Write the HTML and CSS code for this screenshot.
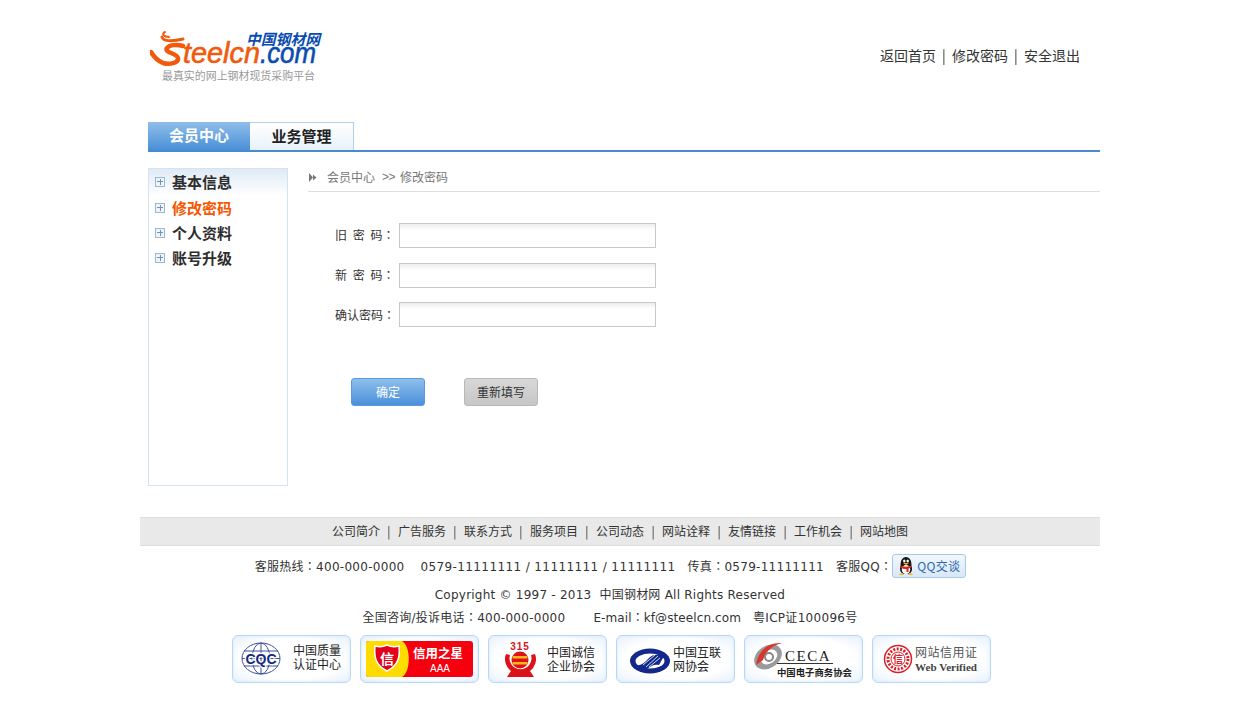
FILE: index.html
```html
<!DOCTYPE html>
<html lang="zh-CN">
<head>
<meta charset="utf-8">
<title>修改密码</title>
<link rel="stylesheet" href="styles.css">
</head>
<body>
<div class="page">
  <header class="top">
    <svg class="logo" width="174" height="54" viewBox="0 0 174 54">
      <g class="logo-s">
        <path class="s3" d="M12 7C13 11 21 12 33 9"/>
        <path class="s2" d="M15 2C11 4 14 7 19 7"/>
        <path class="s5" d="M33 16C26 14 19 15 17 18C14 23 27 23 28 28C29 33 19 35 13 33C8 31 4 27 1 22"/>
      </g>
      <text class="logo-en logo-orange" x="33" y="33" textLength="77" lengthAdjust="spacingAndGlyphs">teelcn</text>
      <text class="logo-en logo-blue" x="110" y="33" textLength="56" lengthAdjust="spacingAndGlyphs">.com</text>
      <text class="logo-cn" x="96" y="15" textLength="74" lengthAdjust="spacingAndGlyphs">中国钢材网</text>
      <text class="logo-sub" x="12" y="50" textLength="153" lengthAdjust="spacingAndGlyphs">最真实的网上钢材现货采购平台</text>
    </svg>
    <nav class="toplinks"><a>返回首页</a><i>|</i><a>修改密码</a><i>|</i><a>安全退出</a></nav>
  </header>

  <div class="tabs">
    <a class="tab tab-on">会员中心</a>
    <a class="tab">业务管理</a>
  </div>

  <main class="main">
    <aside class="side">
      <div class="side-item"><span class="plus"></span>基本信息</div>
      <div class="side-item side-cur"><span class="plus"></span>修改密码</div>
      <div class="side-item"><span class="plus"></span>个人资料</div>
      <div class="side-item"><span class="plus"></span>账号升级</div>
    </aside>
    <section class="content">
      <div class="crumb">
        <svg class="crumb-icon" width="8" height="9" viewBox="0 0 8 9"><path d="M0 0l4 4.500-4 4.500zM4 1.500l3.500 3-3.500 3z"/></svg>
        <span>会员中心</span><span class="crumb-sep">&gt;&gt;</span><span>修改密码</span>
      </div>
      <form class="form">
        <div class="row"><label>旧 密 码：</label><input class="field" type="password"></div>
        <div class="row"><label>新 密 码：</label><input class="field" type="password"></div>
        <div class="row row-last"><label>确认密码：</label><input class="field" type="password"></div>
        <div class="btns">
          <button class="btn btn-blue" type="button">确定</button>
          <button class="btn btn-gray" type="button">重新填写</button>
        </div>
      </form>
    </section>
  </main>

  <footer class="foot">
    <nav class="foot-nav"><a>公司简介</a><i>|</i><a>广告服务</a><i>|</i><a>联系方式</a><i>|</i><a>服务项目</a><i>|</i><a>公司动态</a><i>|</i><a>网站诠释</a><i>|</i><a>友情链接</a><i>|</i><a>工作机会</a><i>|</i><a>网站地图</a></nav>
    <div class="foot-body">
      <div class="hotline">
        <span>客服热线：400-000-0000</span><span class="hot-phones">0579-11111111 / 11111111 / 11111111</span><span>传真：0579-11111111</span><span class="hot-qq">客服QQ：</span>
        <span class="qq">
          <svg width="18" height="20" viewBox="0 0 18 20">
            <ellipse cx="9" cy="8" rx="5.500" ry="7" fill="#161616"/>
            <path d="M3 13c0-3 1-4 2-5h8c1 1 2 2 2 5 0 3-2 5-6 5s-6-2-6-5z" fill="#161616"/>
            <ellipse cx="9" cy="13.500" rx="4.200" ry="4.500" fill="#fff"/>
            <ellipse cx="7.300" cy="5" rx="1.200" ry="1.600" fill="#fff"/><ellipse cx="10.700" cy="5" rx="1.200" ry="1.600" fill="#fff"/>
            <path d="M6 7h6l-3 2z" fill="#f5b21a"/>
            <path d="M3.500 9.500c3 1.500 8 1.500 11 0v2l-3 1v3.500H9.500v-3c-2 0-5-.5-6-1.500z" fill="#d8261c"/>
            <path d="M2 19c1-2 4-2 5 0zM11 19c1-2 4-2 5 0z" fill="#f5b21a"/>
          </svg>
          QQ交谈
        </span>
      </div>
      <p class="copy">Copyright © 1997 - 2013&nbsp; 中国钢材网 All Rights Reserved</p>
      <p class="contact"><span>全国咨询/投诉电话：400-000-0000</span><span>E-mail：kf@steelcn.com</span><span>粤ICP证100096号</span></p>
      <div class="badges">
        <div class="badge">
          <svg width="117" height="46" viewBox="1 1 117 46">
            <g class="globe"><ellipse cx="29" cy="23.500" rx="19" ry="15.500"/><ellipse cx="29" cy="23.500" rx="9" ry="15.500"/><path d="M29 8v31M12 16h34M12 31h34M10 23.500h38"/></g>
            <text class="cqc" x="29" y="29" text-anchor="middle">CQC</text>
            <text class="bt" x="61" y="20">中国质量</text>
            <text class="bt" x="61" y="34">认证中心</text>
          </svg>
        </div>
        <div class="badge">
          <svg width="117" height="46" viewBox="1 1 117 46">
            <rect x="6" y="6" width="107" height="36" rx="3" fill="#f5000f"/>
            <path d="M9 6h33c9 5 9 31 0 36H9a3 3 0 0 1-3-3V9a3 3 0 0 1 3-3z" fill="#ffdc00"/>
            <path d="M15 11c4 1 8 1 12-1 4 2 8 2 12 1 1 10 0 19-12 25-12-6-13-15-12-25z" fill="#e2001a" stroke="#fff" stroke-width="1.500"/>
            <text class="xin" x="27" y="29" text-anchor="middle">信</text>
            <text class="star" x="53" y="23">信用之星</text>
            <text class="aaa" x="70" y="37">AAA</text>
          </svg>
        </div>
        <div class="badge">
          <svg width="117" height="46" viewBox="1 1 117 46">
            <path d="M18 19a14.500 14.500 0 0 0 5 17l-4 6h27l-4-6a14.500 14.500 0 0 0 5-17l-4 1a11 11 0 1 1-21 0z" fill="#dc1218"/>
            <circle cx="32" cy="25" r="8.500" fill="#dc1218"/>
            <path d="M24.500 21h15v2.500h-15zM24.500 27h15v2.500h-15z" fill="#f7b81e"/>
            <text class="e315" x="32" y="15" text-anchor="middle">315</text>
            <text class="bt" x="59" y="22">中国诚信</text>
            <text class="bt" x="59" y="36">企业协会</text>
          </svg>
        </div>
        <div class="badge">
          <svg width="117" height="46" viewBox="1 1 117 46">
            <ellipse cx="34" cy="26" rx="20" ry="12.500" fill="#14288c"/>
            <ellipse cx="34" cy="26" rx="14.500" ry="7.500" fill="#fff"/>
            <path d="M20 30C26 31 29 27 33 23S41 19 48 21L43 30C38 29 35 31 31 34 27 35 23 33 20 30z" fill="#14288c"/>
            <path d="M30 32L42 21M33 32L44 23M27 30L39 20" stroke="#c8d4ee" stroke-width="1"/>
            <text class="bt" x="57" y="22">中国互联</text>
            <text class="bt" x="57" y="36">网协会</text>
          </svg>
        </div>
        <div class="badge">
          <svg width="117" height="46" viewBox="1 1 117 46">
            <ellipse cx="24" cy="22" rx="15" ry="11" fill="#9a9a9a" transform="rotate(-35 24 22)"/>
            <ellipse cx="25" cy="22" rx="9" ry="6.500" fill="#fff" transform="rotate(-35 25 22)"/>
            <path d="M12 30C14 16 24 7 38 8 30 10 22 15 19 25z" fill="#d8362c"/>
            <circle cx="25" cy="22" r="4" fill="none" stroke="#888" stroke-width="2"/>
            <text class="ceca" x="41" y="26">CECA</text>
            <path d="M33 28.500h56" stroke="#333"/>
            <text class="ceca-cn" x="33" y="41" textLength="75" lengthAdjust="spacingAndGlyphs">中国电子商务协会</text>
          </svg>
        </div>
        <div class="badge">
          <svg width="117" height="46" viewBox="1 1 117 46">
            <circle cx="26" cy="24" r="13.500" fill="none" stroke="#d8202a" stroke-width="1.500"/>
            <circle cx="26" cy="24" r="7" fill="none" stroke="#d8202a" stroke-width="1"/>
            <circle cx="26" cy="24" r="10" fill="none" stroke="#d8202a" stroke-width="3" stroke-dasharray="2 1.500"/>
            <text class="stamp" x="26" y="28" text-anchor="middle">信</text>
            <text class="bt bt-gray" x="43" y="22" textLength="62">网站信用证</text>
            <text class="web" x="43" y="36" textLength="62" lengthAdjust="spacingAndGlyphs">Web Verified</text>
          </svg>
        </div>
      </div>
    </div>
  </footer>
</div>
</body>
</html>
```
FILE: styles.css
```css
* { box-sizing: border-box; }
html, body { margin: 0; padding: 0; background: #fff; }
body { font: 12px/1 "Noto Sans CJK SC", "DejaVu Sans", sans-serif; color: #333; }
i { font-style: normal; will-change: opacity; }

.page { width: 960px; margin-left: 140px; }

.top { height: 122px; padding: 30px 20px 0 10px; display: flex; justify-content: space-between; align-items: flex-start; }
.logo { display: block; }
.logo-s { fill: none; stroke: #f15a0d; stroke-linecap: round; }
.s2 { stroke-width: 2; }
.s3 { stroke-width: 3; }
.s5 { stroke-width: 4.500; }
.logo-en { font: italic 30px "Liberation Sans", sans-serif; stroke-width: .6px; }
.logo-orange { fill: #f15a0d; stroke: #f15a0d; }
.logo-blue { fill: #0a4cb0; stroke: #0a4cb0; }
.logo-cn { font: italic 700 15px "Noto Sans CJK SC", sans-serif; fill: #0a4cb0; }
.logo-sub { font: 11px "Noto Sans CJK SC", sans-serif; fill: #999; }

.toplinks { display: flex; margin-top: 17px; font-size: 14px; line-height: 16px; color: #333; }
.toplinks i { width: 16px; text-align: center; }

.tabs { margin-left: 8px; width: 952px; height: 30px; display: flex; border-bottom: 2px solid #4a8ad0; }
.tab { height: 28px; padding-bottom: 3px; display: flex; align-items: center; justify-content: center; font-size: 15px; font-weight: 700; }
.tab-on { width: 102px; color: #fff; background: linear-gradient(#8fbeea, #4a90d8); }
.tab:not(.tab-on) { width: 104px; padding-bottom: 2px; color: #222; background: linear-gradient(#fff, #e8f2fb); border: 1px solid #b3cfe9; border-bottom: 0; border-left: 0; }

.main { display: flex; margin: 16px 0 0 8px; height: 318px; }
.side { width: 140px; height: 318px; border: 1px solid #d3e3f1; background: linear-gradient(#dfeaf5, #fff 27px); }
.side-item { height: 25px; display: flex; align-items: center; padding-left: 6px; gap: 7px; font-size: 15px; font-weight: 700; color: #2d2d2d; }
.side-item:first-child { margin-bottom: 1px; }
.side-cur { color: #f85500; }
.plus { width: 10px; height: 10px; border: 1px solid #9bb8cf; background:
  linear-gradient(#6f94b3, #6f94b3) center / 6px 1px no-repeat,
  linear-gradient(#6f94b3, #6f94b3) center / 1px 6px no-repeat,
  #eef4f9; }

.content { margin-left: 20px; width: 792px; }
.crumb { height: 24px; display: flex; align-items: center; color: #777; border-bottom: 1px solid #ddd; padding: 0 0 5px 1px; }
.crumb-icon { fill: #777; margin-right: 10px; }
.crumb-sep { margin: 0 5px 0 7px; width: 13px; font-family: "Liberation Sans", sans-serif; letter-spacing: -.5px; }

.form { padding-top: 31px; }
.row { display: flex; align-items: center; height: 25px; margin-bottom: 15px; }
.row-last { margin-bottom: 0; margin-top: -1px; }
.row label { width: 91px; padding: 0 0 2px 27px; font-family: "Noto Sans CJK TC", sans-serif; font-feature-settings: "locl" 0; word-spacing: 3px; color: #333; white-space: nowrap; }
.row-last label { padding-bottom: 0; }
.field { width: 257px; height: 25px; padding: 0; border: 1px solid #c8c8c8; background: linear-gradient(#ededed, #fff 6px); outline: none; }

.btns { display: flex; gap: 39px; margin: 51px 0 0 43px; }
.btn { width: 74px; height: 28px; padding: 0 0 2px; border-radius: 3px; font: 12px "Noto Sans CJK SC", sans-serif; }
.btn-blue { color: #fff; border: 1px solid #5a9ade; background: linear-gradient(#8fbfec, #4a90da); }
.btn-gray { color: #333; border: 1px solid #b8b8b8; background: linear-gradient(#d8d8d8, #c6c6c6); }

.foot { margin-top: 31px; }
.foot-nav { height: 29px; padding-bottom: 2px; display: flex; justify-content: center; align-items: center; background: #e9e9e9; border-top: 1px solid #e0e0e0; border-bottom: 1px solid #dedede; color: #333; }
.foot-nav i { width: 18px; text-align: center; }

.foot-body { width: 940px; display: flex; flex-direction: column; align-items: center; color: #333; }
.hotline, .copy, .contact { font-family: "DejaVu Sans", "Noto Sans CJK TC", sans-serif; font-feature-settings: "locl" 0; }
.hotline { height: 24px; margin: 8px 0 0 1px; display: flex; align-items: center; letter-spacing: .28px; white-space: nowrap; }
.hotline span { margin-right: 12px; padding-top: 1px; }
.hotline span:first-child { margin-right: 16px; }
.hotline span.hot-phones { letter-spacing: .39px; }
.hotline span.hot-qq { margin-right: 0; }
.hotline span.qq { margin: 0; padding-top: 0; }
.qq { width: 74px; height: 24px; display: flex; align-items: center; gap: 2px; padding-left: 4px; border: 1px solid #a9c8e6; border-radius: 3px; background: linear-gradient(#f2f7fd, #d8e7f7); color: #2a6aae; font-family: "Noto Sans CJK SC", sans-serif; letter-spacing: .3px; }

.copy { margin: 10px 0 0; line-height: 14px; letter-spacing: .23px; }
.contact { margin: 9px 0 0; line-height: 14px; display: flex; letter-spacing: .1px; }
.contact span:first-child { margin-right: 28px; letter-spacing: .27px; }
.contact span:nth-child(2) { margin-right: 12px; }
.contact span:nth-child(3) { letter-spacing: .3px; }

.badges { display: flex; gap: 9px; margin: 10px 0 0 3px; }
.badge { width: 119px; height: 48px; border: 1px solid #b9d8f5; border-radius: 6px; box-shadow: inset 0 0 3px #d4e6f9; background: radial-gradient(ellipse at center, #fff 60%, #e6f1fc); }
.badge svg { display: block; }
.bt { font: 12px "Noto Sans CJK SC", sans-serif; fill: #222; }
.bt-gray { fill: #555; }
.globe { fill: none; stroke: #3f4f9c; stroke-width: 1; }
.cqc { font: 700 14px "Liberation Sans", sans-serif; fill: #14287c; stroke: #fff; stroke-width: 2.500px; paint-order: stroke; }
.xin { font: 700 14px "Noto Sans CJK SC", sans-serif; fill: #fff; }
.star { font: 700 12.500px "Noto Sans CJK SC", sans-serif; fill: #fff; }
.aaa { font: 10px "Liberation Sans", sans-serif; fill: #fff; }
.e315 { font: 700 10px "Liberation Sans", sans-serif; letter-spacing: 1px; fill: #d8141c; }
.ceca { font: 15px "Liberation Serif", serif; letter-spacing: 1.500px; fill: #222; }
.ceca-cn { font: 700 9.500px "Noto Sans CJK SC", sans-serif; fill: #222; }
.stamp { font: 700 10px "Noto Sans CJK SC", sans-serif; fill: #d8202a; }
.web { font: 700 10px "Liberation Serif", serif; fill: #444; }
```
